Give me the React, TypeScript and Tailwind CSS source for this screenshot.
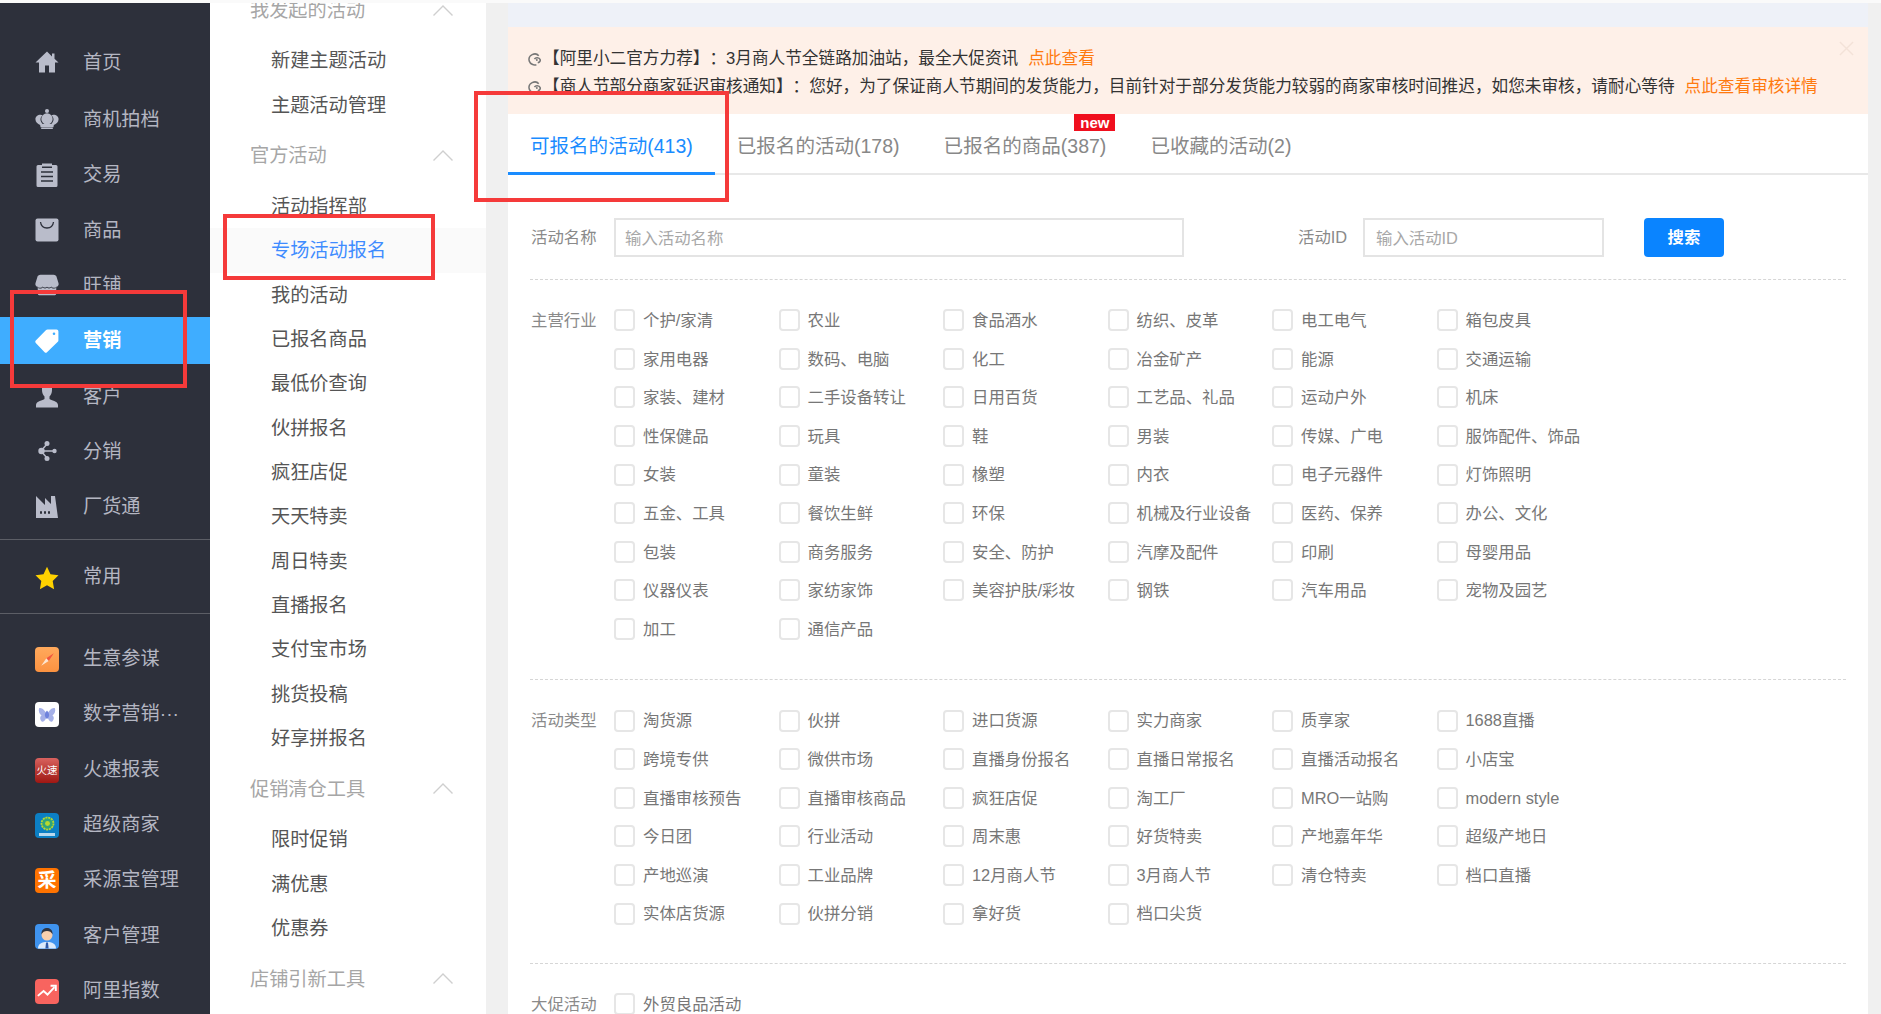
import React from 'react';

const FONT = 'font-["Liberation_Sans","Noto_Sans_CJK_SC",sans-serif]';

const HomeIcon = () => (
  <svg viewBox="0 0 24 24" className="w-6 h-6 fill-[#b9bcca]">
    <path d="M12 1.500 .5 12.500H4V22.500H10V15.500H14V22.500H20V12.500H23.500L19.500 8.800V3.500H17V6.500L12 1.500Z" />
  </svg>
);
const CrownIcon = () => (
  <svg viewBox="0 0 28 24" className="w-7 h-6 fill-[#b9bcca]">
    <circle cx="14" cy="2.600" r="2.400" />
    <circle cx="14" cy="12" r="6.600" />
    <path d="M6.500 7C3 7 .5 9.300.5 12.300c0 3.200 2.600 5.700 5.500 6.700L6.500 21.500H21.500L22 19c2.900-1 5.500-3.500 5.500-6.700 0-3-2.500-5.300-6-5.300-1 0-1.800.3-2.500.7 2 1.500 2.600 3.300 2.600 5 0 1.900-1.100 3.800-2.600 5H9c-1.500-1.200-2.600-3.100-2.600-5 0-1.700.6-3.500 2.600-5C8.300 7.300 7.500 7 6.500 7Z" />
    <rect x="7" y="21.800" width="14" height="1.800" rx=".9" />
  </svg>
);
const ClipboardIcon = () => (
  <svg viewBox="0 0 24 24" className="w-6 h-6">
    <path className="fill-[#b9bcca]" d="M1.500 3.500A1.500 1.500 0 0 1 3 2H7V.5h10V2h4a1.500 1.500 0 0 1 1.500 1.500v19A1.500 1.500 0 0 1 21 24H3a1.500 1.500 0 0 1-1.500-1.500Z" />
    <path className="stroke-[#2d303b]" strokeWidth="1.600" fill="none" d="M6 9h12M6 13.500h12M6 18h12M7 4.200h10" />
  </svg>
);
const BagIcon = () => (
  <svg viewBox="0 0 24 24" className="w-6 h-6">
    <rect x="0.500" y="0.500" width="23" height="23" rx="2" className="fill-[#b9bcca]" />
    <path d="M5.500 4c.5 4 3.300 6 6.500 6s6-2 6.500-6" fill="none" className="stroke-[#2d303b]" strokeWidth="1.300" />
  </svg>
);
const ShopIcon = () => (
  <svg viewBox="0 0 26 24" className="w-[26px] h-6">
    <path className="fill-[#b9bcca]" d="M6 1h14c2 0 3 1 3.500 2.500l2 6.500c.5 2-.5 3.500-2.500 4v7.500a1.500 1.500 0 0 1-1.500 1.500h-17A1.500 1.500 0 0 1 3 21.500V14C1 13.500 0 12 .5 10l2-6.500C3 2 4 1 6 1Z" />
    <path className="stroke-[#2d303b]" strokeWidth="1" fill="none" d="M3.500 15c2 .8 4 .5 5-.8 1 1.300 3.500 1.500 4.500 0 1 1.500 3.500 1.300 4.500 0 1 1.300 3 1.600 5 .8" />
  </svg>
);
const TagIcon = () => (
  <svg viewBox="0 0 24 24" className="w-6 h-6 fill-white">
    <path fillRule="evenodd" d="M21.500.5h-9c-.6 0-1 .2-1.400.6L.8 11.500c-.7.7-.7 1.700 0 2.400l8.800 9.300c.7.7 1.700.7 2.400 0L22.800 12.800c.4-.4.600-.8.600-1.400V2.500c0-1.100-.8-2-1.900-2ZM19 3.500a1.300 1.300 0 1 1 0 2.600 1.300 1.300 0 0 1 0-2.600Z" />
  </svg>
);
const PersonIcon = () => (
  <svg viewBox="0 0 24 24" className="w-6 h-6 fill-[#b9bcca]">
    <path d="M7 1h10v5c0 3-1 5-2.500 6.500V15c1.500 1.500 8.500 2 8.500 6v2.500H1V21c0-4 7-4.500 8.500-6v-2.500C8 11 7 9 7 6Z" />
  </svg>
);
const ShareIcon = () => (
  <svg viewBox="0 0 24 24" className="w-6 h-6 fill-[#b9bcca] stroke-[#b9bcca]">
    <path d="M6 12 12 5M6 12h14M6 12l6 7" strokeWidth="1.500" fill="none" />
    <circle cx="6.500" cy="12" r="3.200" stroke="none" />
    <circle cx="12" cy="4.500" r="2.500" stroke="none" />
    <circle cx="12" cy="19.500" r="2.500" stroke="none" />
    <circle cx="19.500" cy="12" r="2.200" stroke="none" />
  </svg>
);
const FactoryIcon = () => (
  <svg viewBox="0 0 24 24" className="w-6 h-6">
    <path className="fill-[#b9bcca]" d="M1 1 10 10V3l6 6V1h4l3 22H1Z" />
    <path className="stroke-[#2d303b]" strokeWidth="2.500" strokeDasharray="2 2" d="M5 17.500h12" />
  </svg>
);
const StarIcon = () => (
  <svg viewBox="0 0 24 24" className="w-[26px] h-[26px] fill-[#ffd200]">
    <path d="M12 .8 15.500 8.200 23.500 9.300 17.700 15 19.100 23.200 12 19.300 4.900 23.200 6.300 15 .5 9.300 8.500 8.200Z" />
  </svg>
);

const AppBox = ({ className, children }: { className: string; children?: React.ReactNode }) => (
  <div className={`w-[25px] h-[25px] rounded-[4px] overflow-hidden flex items-center justify-center ${className}`}>{children}</div>
);

const CompassApp = () => (
  <AppBox className="bg-gradient-to-b from-[#ffa95c] to-[#fb9240]">
    <svg viewBox="0 0 24 24" className="w-[19px] h-[19px]">
      <path d="M20 4 13.500 14 10.500 10.500Z" fill="#f0543f" />
      <path d="M4 20 13.500 14 10.500 10.500Z" fill="#fde5cf" />
    </svg>
  </AppBox>
);
const ButterflyApp = () => (
  <AppBox className="bg-white">
    <svg viewBox="0 0 24 24" className="w-5 h-5">
      <path d="M12 12C10 6 5 2.500 2.500 4c-1 3 0 7 3 8.500C3 14 3.500 18 6 20c3 .5 5-3 6-8Z" fill="#a5b0e8" />
      <path d="M12 12c2-6 7-9.500 9.500-8 1 3 0 7-3 8.500 2.500 1.500 2 5.500-.5 7.500-3 .5-5-3-6-8Z" fill="#a5b0e8" />
      <path d="M12 6.500c-1.500 2-3 4-2.500 6.500.5 2 2 3.500 2.500 4 .5-.5 2-2 2.500-4 .5-2.500-1-4.500-2.500-6.500Z" fill="#6f82dc" />
    </svg>
  </AppBox>
);
const HuosuApp = () => (
  <AppBox className="bg-gradient-to-b from-[#d9625f] via-[#b93a35] to-[#a01612]">
    <span className="text-[10.500px] leading-none text-white whitespace-nowrap">火速</span>
  </AppBox>
);
const SuperApp = () => (
  <AppBox className="bg-[#0c7fc4] flex-col">
    <svg viewBox="0 0 24 24" className="w-[17px] h-[17px] mt-[1px]">
      <circle cx="12" cy="12" r="8.500" fill="#2fa47c" stroke="#b7d72f" strokeWidth="2.500" strokeDasharray="3 1" />
      <circle cx="12" cy="12" r="3.500" fill="#b7d72f" />
    </svg>
    <div className="w-[16px] h-[3px] mt-[1px] bg-[#b9d9ee]" />
  </AppBox>
);
const CaiyuanApp = () => (
  <AppBox className="bg-[#ff7300]">
    <span className="text-[19px] leading-none font-bold text-white">采</span>
  </AppBox>
);
const CustomerApp = () => (
  <AppBox className="bg-[#3f93ee]">
    <svg viewBox="0 0 24 24" className="w-[25px] h-[25px]">
      <path d="M3 24c0-5 4-6.500 9-6.500s9 1.500 9 6.500Z" fill="#dceafa" />
      <circle cx="12" cy="10.500" r="5.500" fill="#f7cfae" />
      <path d="M6.500 10c-.5-5 3-6.500 5.500-6.500S18 5 17.500 10c-1-2.500-3-3.500-5.500-3.500S7.500 7.500 6.500 10Z" fill="#2f3440" />
      <path d="M11 18h2l.6 6h-3.200Z" fill="#2f5aa8" />
    </svg>
  </AppBox>
);
const ChartApp = () => (
  <AppBox className="bg-[#f8645f]">
    <svg viewBox="0 0 24 24" className="w-[21px] h-[21px] fill-none stroke-white" strokeWidth="2.200">
      <path d="M1 17 7.500 11.500 12 15.500 20 7" />
      <path d="M15.500 5.500H21.500V11.500" />
    </svg>
  </AppBox>
);

const mainNav: { icon: React.ReactNode; label: string; active?: boolean }[] = [
  { icon: <HomeIcon />, label: '首页' },
  { icon: <CrownIcon />, label: '商机拍档' },
  { icon: <ClipboardIcon />, label: '交易' },
  { icon: <BagIcon />, label: '商品' },
  { icon: <ShopIcon />, label: '旺铺' },
  { icon: <TagIcon />, label: '营销', active: true },
  { icon: <PersonIcon />, label: '客户' },
  { icon: <ShareIcon />, label: '分销' },
  { icon: <FactoryIcon />, label: '厂货通' },
];

const appNav: { icon: React.ReactNode; label: string }[] = [
  { icon: <CompassApp />, label: '生意参谋' },
  { icon: <ButterflyApp />, label: '数字营销···' },
  { icon: <HuosuApp />, label: '火速报表' },
  { icon: <SuperApp />, label: '超级商家' },
  { icon: <CaiyuanApp />, label: '采源宝管理' },
  { icon: <CustomerApp />, label: '客户管理' },
  { icon: <ChartApp />, label: '阿里指数' },
];

function NavRow({ icon, label, active, className = '', nudge }: { icon: React.ReactNode; label: string; active?: boolean; className?: string; nudge?: boolean }) {
  return (
    <div className={`h-[55.3px] flex items-center ${className}`}>
      <div className={`h-[47px] w-full flex items-center ${active ? 'bg-[#3fadff]' : ''}`}>
        <div className="w-[83px] pl-[35px] shrink-0">
          <div className="w-6 flex justify-center">{icon}</div>
        </div>
        <span className={`text-[19.200px] whitespace-nowrap ${nudge ? 'mt-[2px]' : ''} ${active ? 'text-white font-bold' : 'text-[#b4b6c2]'}`}>{label}</span>
      </div>
    </div>
  );
}

function Chevron() {
  return (
    <svg viewBox="0 0 20 11" className="w-5 h-[11px] fill-none stroke-[#cfcfcf]" strokeWidth="1.400">
      <path d="M.5 10.500 10 1l9.500 9.500" />
    </svg>
  );
}

const subMenu: { title: string; items: string[] }[] = [
  { title: '我发起的活动', items: ['新建主题活动', '主题活动管理'] },
  {
    title: '官方活动',
    items: ['活动指挥部', '专场活动报名', '我的活动', '已报名商品', '最低价查询', '伙拼报名', '疯狂店促', '天天特卖', '周日特卖', '直播报名', '支付宝市场', '挑货投稿', '好享拼报名'],
  },
  { title: '促销清仓工具', items: ['限时促销', '满优惠', '优惠券'] },
  { title: '店铺引新工具', items: [] },
];

function SubMenu() {
  return (
    <aside className="w-[276px] shrink-0 bg-white overflow-hidden">
      <div className="-mt-[21.500px]">
        {subMenu.map((group) => (
          <div key={group.title}>
            <div className="h-[57px] pl-[40px] pr-[33px] flex items-center justify-between text-[19.200px] text-[#a6a6a6]">
              <span className="mt-[2px]">{group.title}</span>
              <Chevron />
            </div>
            {group.items.map((item) => (
              <div
                key={item}
                className={`h-[44.330px] pl-[61px] pt-[2px] flex items-center text-[19.200px] ${item === '专场活动报名' ? 'bg-[#fafafa] text-[#3f8cff]' : 'text-[#555555]'}`}
              >
                {item}
              </div>
            ))}
          </div>
        ))}
      </div>
    </aside>
  );
}

const tabs = [
  { label: '可报名的活动(413)', active: true },
  { label: '已报名的活动(178)' },
  { label: '已报名的商品(387)', badge: true },
  { label: '已收藏的活动(2)' },
];

const industries = [
  '个护/家清', '农业', '食品酒水', '纺织、皮革', '电工电气', '箱包皮具',
  '家用电器', '数码、电脑', '化工', '冶金矿产', '能源', '交通运输',
  '家装、建材', '二手设备转让', '日用百货', '工艺品、礼品', '运动户外', '机床',
  '性保健品', '玩具', '鞋', '男装', '传媒、广电', '服饰配件、饰品',
  '女装', '童装', '橡塑', '内衣', '电子元器件', '灯饰照明',
  '五金、工具', '餐饮生鲜', '环保', '机械及行业设备', '医药、保养', '办公、文化',
  '包装', '商务服务', '安全、防护', '汽摩及配件', '印刷', '母婴用品',
  '仪器仪表', '家纺家饰', '美容护肤/彩妆', '钢铁', '汽车用品', '宠物及园艺',
  '加工', '通信产品',
];

const activityTypes = [
  '淘货源', '伙拼', '进口货源', '实力商家', '质享家', '1688直播',
  '跨境专供', '微供市场', '直播身份报名', '直播日常报名', '直播活动报名', '小店宝',
  '直播审核预告', '直播审核商品', '疯狂店促', '淘工厂', 'MRO一站购', 'modern style',
  '今日团', '行业活动', '周末惠', '好货特卖', '产地嘉年华', '超级产地日',
  '产地巡演', '工业品牌', '12月商人节', '3月商人节', '清仓特卖', '档口直播',
  '实体店货源', '伙拼分销', '拿好货', '档口尖货',
];

function OptionGroup({ label, options }: { label: string; options: string[] }) {
  return (
    <div className="flex mt-[20px] mx-[22px]">
      <div className="w-[84px] pl-[1px] h-[38.600px] flex items-center text-[16.400px] text-[#8a8a8a] shrink-0">{label}</div>
      <div className="grid grid-cols-[repeat(6,164.500px)] auto-rows-[38.600px]">
        {options.map((o) => (
          <label key={o} className="flex items-center gap-2 text-[16.400px] text-[#777777] whitespace-nowrap">
            <input type="checkbox" className="appearance-none w-[21px] h-[22px] rounded-[4px] border-2 border-[#e6e6e6] bg-white shrink-0" />
            {o}
          </label>
        ))}
      </div>
    </div>
  );
}

function Divider({ className = '' }: { className?: string }) {
  return <div className={`mx-[22px] h-[2px] border-t border-dashed border-[#d6d6d6] ${className}`} />;
}

function RefreshMark() {
  return (
    <svg viewBox="0 0 16 16" className="w-[15px] h-[15px] fill-none stroke-[#777777] shrink-0" strokeWidth="1.700">
      <path d="M12.500 4C11 2.200 8 1.700 5.500 2.800 2.700 4 1.500 7 2.500 9.800 3.500 12.800 7 14.500 10 13.500" />
      <path d="M8 7.500c1-2 5-2 6 .5.5 1.500-.5 3-2.500 3.500" />
      <circle cx="10.500" cy="8.500" r="1" fill="#777777" stroke="none" />
    </svg>
  );
}

export default function App() {
  return (
    <div className={`relative w-[1881px] h-[1014px] overflow-hidden flex flex-col bg-[#f0f0f0] ${FONT}`}>
      <div className="h-[3px] bg-[#fafafa] shrink-0" />
      <div className="flex flex-1 min-h-0">
        <nav className="w-[210px] shrink-0 bg-[#2d303b] pt-[31.300px]">
          {mainNav.map((n, i) => (
            <NavRow key={n.label} {...n} nudge className={i === 0 ? 'mb-[2.200px]' : ''} />
          ))}
          <div className="mt-[5px] h-px bg-[#5c5e66]" />
          <NavRow icon={<StarIcon />} label="常用" className="mt-[10px]" />
          <div className="mt-[8px] h-px bg-[#5c5e66]" />
          <div className="mt-[17.500px]">
            {appNav.map((n) => (
              <NavRow key={n.label} {...n} />
            ))}
          </div>
        </nav>

        <SubMenu />

        <main className="ml-[22px] w-[1360px] shrink-0 flex flex-col">
          <div className="h-[24px] bg-[#eef1f8] shrink-0" />
          <div className="relative h-[87px] shrink-0 bg-[#fef0e8] pt-[18px] pl-[19px] text-[16.650px] leading-[28px] text-[#333333] [text-spacing-trim:space-all]">
            <div className="flex items-center gap-[1px] whitespace-nowrap">
              <RefreshMark />
              <span>【阿里小二官方力荐】：3月商人节全链路加油站，最全大促资讯</span>
              <span className="ml-[9px] text-[#ff7a0f]">点此查看</span>
            </div>
            <div className="flex items-center gap-[1px] whitespace-nowrap">
              <RefreshMark />
              <span>【商人节部分商家延迟审核通知】：您好，为了保证商人节期间的发货能力，目前针对于部分发货能力较弱的商家审核时间推迟，如您未审核，请耐心等待</span>
              <span className="ml-[9px] text-[#ff7a0f]">点此查看审核详情</span>
            </div>
            <svg viewBox="0 0 16 16" className="absolute right-[14px] top-[14px] w-[15px] h-[15px] fill-none stroke-[#f3e2d8]" strokeWidth="1.500">
              <path d="M1 1l14 14M15 1 1 15" />
            </svg>
          </div>

          <div className="flex-1 bg-white min-h-0 overflow-hidden">
            <div className="h-[61px] border-b-2 border-[#e8e8e8] flex">
              {tabs.map((t) => (
                <div
                  key={t.label}
                  className={`relative h-[61px] px-[22px] flex items-center text-[19.550px] whitespace-nowrap ${t.active ? 'pt-[7px] text-[#1a8cff] border-b-[3px] border-[#1a8cff]' : 'pt-[4px] text-[#888888]'}`}
                >
                  {t.label}
                  {t.badge && (
                    <span className="absolute top-0 right-[13px] w-[41px] h-[17px] bg-[#f00f1e] text-white text-[15px] leading-[17px] font-bold text-center">new</span>
                  )}
                </div>
              ))}
            </div>

            <div className="mt-[43px] pl-[23px] flex items-center h-[39px]">
              <span className="w-[83px] text-[16.400px] text-[#8a8a8a]">活动名称</span>
              <input
                placeholder="输入活动名称"
                className="w-[570px] h-full px-[9px] pt-[1px] border-2 border-[#e4e4e4] text-[16.400px] placeholder:text-[#a8a8a8] outline-none"
              />
              <span className="ml-[114px] w-[65px] text-[16.400px] text-[#8a8a8a]">活动ID</span>
              <input
                placeholder="输入活动ID"
                className="w-[241px] h-full px-[11px] pt-[1px] border-2 border-[#e4e4e4] text-[16.400px] placeholder:text-[#a8a8a8] outline-none"
              />
              <button className="ml-[40px] w-[80px] h-full rounded-[4px] bg-[#0a84ff] text-white text-[16.400px] font-bold">搜索</button>
            </div>

            <Divider className="mt-[22px]" />
            <OptionGroup label="主营行业" options={industries} />
            <Divider className="mt-[31px]" />
            <OptionGroup label="活动类型" options={activityTypes} />
            <Divider className="mt-[30px]" />
            <OptionGroup label="大促活动" options={['外贸良品活动']} />
          </div>
        </main>
      </div>

      {/* red annotation boxes drawn over the screenshot */}
      <div className="absolute left-[10px] top-[290px] w-[177px] h-[98px] border-4 border-[#f53a3a]" />
      <div className="absolute left-[223px] top-[214px] w-[212px] h-[66px] border-4 border-[#f53a3a]" />
      <div className="absolute left-[474px] top-[91px] w-[255px] h-[111px] border-4 border-[#f53a3a]" />
    </div>
  );
}
